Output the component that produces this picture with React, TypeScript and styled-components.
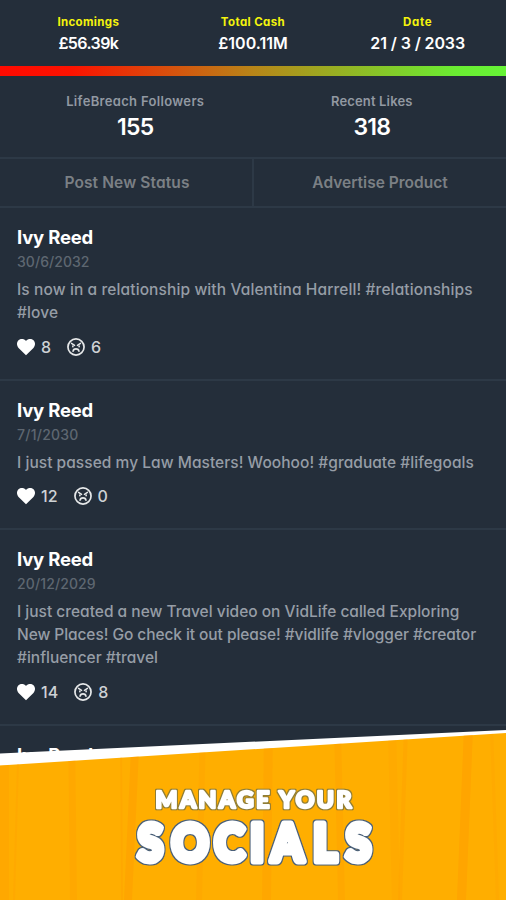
import React from "react";
import styled, { createGlobalStyle } from "styled-components";

const Global = createGlobalStyle`
  * { box-sizing: border-box; }
  body {
    margin: 0;
    background: #242e3a;
    font-family: Inter, "Noto Sans", sans-serif;
    font-feature-settings: "cv11" 1, "ss03" 1;
    color: #fff;
    overflow: hidden;
  }
`;

const Screen = styled.main`
  position: relative;
  display: flex;
  flex-direction: column;
  width: 506px;
  height: 900px;
  overflow: hidden;
  background: #242e3a;
`;

const TopBar = styled.header`
  display: grid;
  grid-template-columns: repeat(3, 1fr);
  height: 66px;
  padding: 14px 6px 0;
  text-align: center;
  white-space: nowrap;
`;

const TopLabel = styled.div<{ $track?: number }>`
  color: #f4f40c;
  font-size: 11.5px;
  font-weight: 700;
  line-height: 16px;
  letter-spacing: ${(p) => p.$track ?? 0}px;
`;

const TopValue = styled.div<{ $track?: number }>`
  font-size: 16px;
  font-weight: 600;
  line-height: 26px;
  letter-spacing: ${(p) => p.$track ?? 0}px;
`;

const MoodBar = styled.div`
  flex: none;
  height: 10px;
  background: linear-gradient(90deg, #ff0a00 0, #fc1200 14%, #b88518 50%, #6aec32 90%, #66f437 100%);
`;

const Stats = styled.section`
  display: grid;
  grid-template-columns: 1fr 1fr;
  height: 81px;
  padding: 16px 16px 0 17px;
  text-align: center;
`;

const StatLabel = styled.div<{ $track?: number }>`
  color: #9299a2;
  font-size: 13px;
  font-weight: 600;
  line-height: 18px;
  letter-spacing: ${(p) => p.$track ?? 0}px;
`;

const StatValue = styled.div`
  font-size: 23px;
  font-weight: 600;
  line-height: 35px;
  letter-spacing: -0.8px;
`;

const Actions = styled.nav`
  display: grid;
  grid-template-columns: 1fr 1fr;
  flex: none;
  height: 51px;
  border-top: 2px solid #2d3946;
  border-bottom: 2px solid #2d3946;
`;

const Action = styled.button<{ $track?: number }>`
  appearance: none;
  border: 0;
  padding: 0 0 0 1px;
  background: transparent;
  color: #7b8085;
  font: inherit;
  font-size: 15.5px;
  font-weight: 600;
  letter-spacing: ${(p) => p.$track ?? 0}px;
  & + & { box-shadow: -1px 0 0 #2d3946, inset 1px 0 0 #2d3946; }
`;

const Post = styled.article`
  flex: none;
  padding: 16px 17px 20px;
  border-bottom: 2px solid #2d3946;
`;

const Author = styled.h2`
  margin: 0;
  font-size: 18.5px;
  font-weight: 700;
  line-height: 26px;
  letter-spacing: -0.2px;
`;

const PostDate = styled.time<{ $track?: number }>`
  display: block;
  color: #5e6771;
  font-size: 14px;
  font-weight: 500;
  line-height: 23px;
  letter-spacing: ${(p) => p.$track ?? 0}px;
`;

const Body = styled.p`
  margin: 6px 0 0;
  color: #969da6;
  font-size: 15.5px;
  font-weight: 500;
  line-height: 22.75px;
  white-space: nowrap;
`;

const Line = styled.span<{ $track?: number }>`
  display: block;
  letter-spacing: ${(p) => p.$track ?? 0}px;
`;

const Reactions = styled.div`
  display: flex;
  align-items: center;
  height: 24px;
  margin-top: 10px;
  color: #ced2d5;
  font-size: 16px;
  font-weight: 500;
`;

const Reaction = styled.span`
  display: flex;
  align-items: center;
  gap: 6px;
  margin-right: 16px;
  svg { flex: none; display: block; }
`;

const Banner = styled.footer`
  position: absolute;
  left: 0;
  right: 0;
  bottom: 0;
  height: 172px;
  svg { display: block; }
`;

const Lettering = styled.text`
  font-family: Lato, sans-serif;
  font-weight: 900;
  fill: #fff;
  stroke: #fff;
  stroke-linejoin: round;
`;

const Heart = () => (
  <svg width="18" height="18" viewBox="0 0 18 18">
    <path
      fill="#fff"
      d="M9 17.200 1.800 10.200C-.6 7.600-.5 4.300 1.500 2.300 3.600.300 7 .600 9 2.900c2-2.300 5.400-2.600 7.500-.6 2 2 2.100 5.300-.3 7.900z"
    />
  </svg>
);

const Angry = () => (
  <svg width="18" height="18" viewBox="0 0 19 19" fill="none" stroke="#e6e8e9" strokeLinecap="round">
    <circle cx="9.500" cy="9.500" r="8.500" strokeWidth="1.800" />
    <path strokeWidth="1.500" d="M4.800 5.600 8 7.800M14.200 5.600 11 7.800" />
    <path strokeWidth="1.700" d="M6.200 8.400v.8M12.800 8.400v.8" />
    <path strokeWidth="1.700" d="M6.400 14c.3-3.400 5.900-3.400 6.200 0" />
  </svg>
);

type PostData = { date: string; dateTrack: number; lines: [string, number][]; likes: number; dislikes: number };

const posts: PostData[] = [
  {
    date: "30/6/2032",
    dateTrack: 0.05,
    lines: [["Is now in a relationship with Valentina Harrell! #relationships", 0.11], ["#love", 0.1]],
    likes: 8,
    dislikes: 6,
  },
  {
    date: "7/1/2030",
    dateTrack: 0.25,
    lines: [["I just passed my Law Masters! Woohoo! #graduate #lifegoals", 0.04]],
    likes: 12,
    dislikes: 0,
  },
  {
    date: "20/12/2029",
    dateTrack: 0.12,
    lines: [
      ["I just created a new Travel video on VidLife called Exploring", 0],
      ["New Places! Go check it out please! #vidlife #vlogger #creator", -0.07],
      ["#influencer #travel", 0],
    ],
    likes: 14,
    dislikes: 8,
  },
];

/* top x, bottom x, width, opacity of each wood-grain streak */
const streaks: [number, number, number, number][] = [
  [0, 0, 9, 0.35],
  [68, 70, 7, 0.4],
  [18, 13, 2, 0.3],
  [132, 124, 8, 0.55],
  [120, 121, 2, 0.4],
  [200, 196, 6, 0.3],
  [264, 262, 9, 0.45],
  [334, 338, 7, 0.4],
  [388, 392, 8, 0.25],
  [404, 398, 4, 0.35],
  [464, 457, 9, 0.6],
  [490, 496, 3, 0.25],
];

/* letters are condensed horizontally, so their centres are divided by the same factor */
const SQUEEZE = 0.87;
const letterCentres = [150.5, 190, 229.5, 257, 287.5, 325, 358.5].map((c) => (c / SQUEEZE).toFixed(2)).join(" ");

export default function App() {
  return (
    <Screen>
      <Global />
      <TopBar>
        <div><TopLabel $track={0.35}>Incomings</TopLabel><TopValue $track={-0.6}>£56.39k</TopValue></div>
        <div><TopLabel $track={0.4}>Total Cash</TopLabel><TopValue>£100.11M</TopValue></div>
        <div><TopLabel $track={0.7}>Date</TopLabel><TopValue $track={-0.1}>21 / 3 / 2033</TopValue></div>
      </TopBar>
      <MoodBar />
      <Stats>
        <div><StatLabel $track={0.33}>LifeBreach Followers</StatLabel><StatValue>155</StatValue></div>
        <div><StatLabel $track={0.15}>Recent Likes</StatLabel><StatValue>318</StatValue></div>
      </Stats>
      <Actions>
        <Action $track={0.12}>Post New Status</Action>
        <Action>Advertise Product</Action>
      </Actions>
      {posts.map((p) => (
        <Post key={p.date}>
          <Author>Ivy Reed</Author>
          <PostDate $track={p.dateTrack}>{p.date}</PostDate>
          <Body>{p.lines.map(([t, k]) => <Line key={t} $track={k}>{t}</Line>)}</Body>
          <Reactions>
            <Reaction><Heart />{p.likes}</Reaction>
            <Reaction><Angry />{p.dislikes}</Reaction>
          </Reactions>
        </Post>
      ))}
      <Post><Author>Ivy Reed</Author></Post>
      <Banner>
        <svg width="506" height="172" viewBox="0 0 506 172">
          <defs>
            <clipPath id="band"><path d="M0 37.500 506 5V172H0z" /></clipPath>
            <filter id="olive" x="-5%" y="-20%" width="110%" height="140%" colorInterpolationFilters="sRGB">
              <feMorphology in="SourceAlpha" operator="dilate" radius="1" result="grown" />
              <feGaussianBlur in="grown" stdDeviation="0.5" result="soft" />
              <feFlood floodColor="#8f7d35" />
              <feComposite in2="soft" operator="in" />
              <feMerge><feMergeNode /><feMergeNode in="SourceGraphic" /></feMerge>
            </filter>
            <filter id="slate" x="-5%" y="-20%" width="110%" height="140%" colorInterpolationFilters="sRGB">
              <feMorphology in="SourceAlpha" operator="dilate" radius="1" result="grown" />
              <feGaussianBlur in="grown" stdDeviation="0.4" result="soft" />
              <feFlood floodColor="#4a6079" />
              <feComposite in2="soft" operator="in" />
              <feMerge><feMergeNode /><feMergeNode in="SourceGraphic" /></feMerge>
            </filter>
          </defs>
          <path d="M0 25.500 506 2V172H0z" fill="#fff" />
          <path d="M0 37.500 506 5V172H0z" fill="#ffae00" />
          <g clipPath="url(#band)" fill="#ff9f00">
            {streaks.map(([a, b, w, o]) => (
              <path key={a} opacity={o} d={`M${a} 0h${w}L${b + w} 172h${-w}z`} />
            ))}
          </g>
          <g filter="url(#olive)">
            <Lettering x="155.500" y="80" fontSize="23" strokeWidth="2.500" textLength="196" lengthAdjust="spacing">
              MANAGE YOUR
            </Lettering>
          </g>
          <g filter="url(#slate)">
            <Lettering
              x={letterCentres}
              y="133.500"
              fontSize="52"
              strokeWidth="7"
              textAnchor="middle"
              transform={`scale(${SQUEEZE} 1)`}
            >
              SOCIALS
            </Lettering>
          </g>
        </svg>
      </Banner>
    </Screen>
  );
}
